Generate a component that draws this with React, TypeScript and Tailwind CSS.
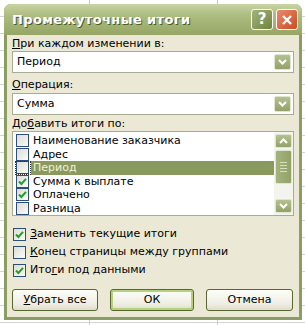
import { useState } from 'react';

const font = { fontFamily: '"DejaVu Sans", "Liberation Sans", sans-serif' };

function Check({ on, className = '' }: { on: boolean; className?: string }) {
  return (
    <span
      className={`flex h-[13px] w-[13px] shrink-0 items-center justify-center border border-[#2c4f7a] bg-[linear-gradient(135deg,#dcdcd4,#fbfbf8)] ${className}`}
    >
      {on && (
        <svg width="9" height="9" viewBox="0 0 9 9">
          <path d="M1 4.5 L3.4 7 L8 1.8" fill="none" stroke="#21a121" strokeWidth="2" />
        </svg>
      )}
    </span>
  );
}

function Chevron({ up = false }: { up?: boolean }) {
  return (
    <svg width="9" height="6" viewBox="0 0 9 6">
      <path d={up ? 'M1 5 L4.5 1.5 L8 5' : 'M1 1 L4.5 4.5 L8 1'} fill="none" stroke="#ffffff" strokeWidth="2" />
    </svg>
  );
}

function ArrowBox({ up = false, h = 16 }: { up?: boolean; h?: number }) {
  return (
    <span
      className={`flex w-[17px] items-center justify-center rounded-[2px] border border-[#dfe5cf] bg-[linear-gradient(#b4c18f,#93a266)] ${
        h === 16 ? 'h-[16px]' : 'h-[14px]'
      }`}
    >
      <Chevron up={up} />
    </span>
  );
}

function Select({ value }: { value: string }) {
  return (
    <div className="flex h-[22px] items-center justify-between border border-[#a5ad92] bg-white pl-[4px] pr-[2px]">
      <span className="text-[11px] text-black">{value}</span>
      <ArrowBox />
    </div>
  );
}

function Btn({ label, u, def = false }: { label: string; u?: number; def?: boolean }) {
  const text =
    u === undefined ? (
      label
    ) : (
      <>
        {label.slice(0, u)}
        <span className="underline">{label[u]}</span>
        {label.slice(u + 1)}
      </>
    );
  return (
    <button
      className={`flex h-[22px] items-center justify-center rounded-[3px] border border-[#56672f] bg-[linear-gradient(#fdfdf9,#efeee4_70%,#dedcca)] text-[11px] text-black ${
        def ? 'shadow-[inset_0_0_0_2px_#b7d07a]' : ''
      }`}
    >
      {text}
    </button>
  );
}

const fields = [
  { name: 'Наименование заказчика', on: false },
  { name: 'Адрес', on: false },
  { name: 'Период', on: false },
  { name: 'Сумма к выплате', on: true },
  { name: 'Оплачено', on: true },
  { name: 'Разница', on: false },
];

export default function App() {
  const [selected] = useState(2);

  return (
    <div
      className="h-[325px] w-[305px] overflow-hidden bg-white bg-[linear-gradient(90deg,transparent_89px,#c9c9c9_89px,#c9c9c9_90px,transparent_90px,transparent_217px,#c9c9c9_217px,#c9c9c9_218px,transparent_218px),repeating-linear-gradient(180deg,transparent_0,transparent_16px,#d4d4d4_16px,#d4d4d4_17px)] pl-[4px] pt-[4px]"
      style={font}
    >
      <div className="flex h-[316px] w-[298px] flex-col overflow-hidden rounded-t-[7px] bg-[#8c9d63]">
        {/* title bar */}
        <div className="flex h-[31px] shrink-0 items-center justify-between bg-[linear-gradient(#c9d4a3,#aebd82_35%,#9cad6d_80%,#94a566)] pl-[8px] pr-[4px]">
          <span className="text-[13px] font-bold tracking-[0.4px] text-white [text-shadow:1px_1px_0_#4d5a2c]">
            Промежуточные итоги
          </span>
          <div className="flex gap-[3px]">
            <span className="flex h-[21px] w-[22px] items-center justify-center rounded-[3px] border border-white bg-[linear-gradient(135deg,#a4b57a,#6f8241)] text-[15px] font-bold text-white">
              ?
            </span>
            <span className="flex h-[21px] w-[22px] items-center justify-center rounded-[3px] border border-white bg-[linear-gradient(135deg,#ec8a6c,#cc4a25)]">
              <svg width="12" height="12" viewBox="0 0 12 12">
                <path d="M2 2 L10 10 M10 2 L2 10" stroke="#ffffff" strokeWidth="2.4" />
              </svg>
            </span>
          </div>
        </div>

        {/* body */}
        <div className="mx-[3px] mb-[3px] flex flex-1 flex-col bg-[#ebe9d6] px-[5px] pt-[2px] text-[11px] text-black">
          <div className="h-[14px] leading-[14px]">
            <span className="underline">П</span>ри каждом изменении в:
          </div>
          <Select value="Период" />

          <div className="mt-[5px] h-[14px] leading-[14px]">
            <span className="underline">О</span>перация:
          </div>
          <div className="mt-[1px]">
            <Select value="Сумма" />
          </div>

          <div className="mt-[2px] h-[14px] leading-[14px]">
            До<span className="underline">б</span>авить итоги по:
          </div>
          <div className="flex h-[85px] border border-[#a5ad92] bg-white">
            <div className="flex flex-1 flex-col pl-[2px] pt-[2px]">
              {fields.map((f, i) => (
                <div key={f.name} className="flex h-[13.5px] items-center">
                  <div
                    className={`flex h-[13.5px] items-center pl-[1px] pr-[2px] ${
                      i === selected ? 'outline-1 outline-dotted outline-[#333] -outline-offset-1' : ''
                    }`}
                  >
                    <Check on={f.on} />
                  </div>
                  <span
                    className={`flex h-[13.5px] flex-1 items-center pl-[2px] leading-none ${
                      i === selected ? 'bg-[#8a9a5e] text-[#f2f0dc]' : ''
                    }`}
                  >
                    {f.name}
                  </span>
                </div>
              ))}
            </div>
            <div className="flex w-[19px] flex-col items-center bg-[#f4f4ee] py-[2px]">
              <ArrowBox up h={14} />
              <span className="mt-[2px] flex h-[34px] w-[17px] flex-col items-center justify-center gap-[2px] rounded-[2px] border border-[#dfe5cf] bg-[linear-gradient(90deg,#a5b47c,#93a266)]">
                <span className="h-px w-[7px] bg-[#d6dec0]" />
                <span className="h-px w-[7px] bg-[#d6dec0]" />
                <span className="h-px w-[7px] bg-[#d6dec0]" />
                <span className="h-px w-[7px] bg-[#d6dec0]" />
              </span>
              <span className="flex-1" />
              <ArrowBox h={14} />
            </div>
          </div>

          <div className="mt-[12px] flex flex-col gap-[5px] pl-[1px]">
            <div className="flex h-[13px] items-center gap-[4px]">
              <Check on />
              <span>
                <span className="underline">З</span>аменить текущие итоги
              </span>
            </div>
            <div className="flex h-[13px] items-center gap-[4px]">
              <Check on={false} />
              <span>
                <span className="underline">К</span>онец страницы между группами
              </span>
            </div>
            <div className="flex h-[13px] items-center gap-[4px]">
              <Check on />
              <span>
                Ито<span className="underline">г</span>и под данными
              </span>
            </div>
          </div>

          <div className="mt-[12px] grid grid-cols-[86px_84px_87px] gap-x-[12px]">
            <Btn label="Убрать все" u={0} />
            <Btn label="ОК" def />
            <Btn label="Отмена" />
          </div>
        </div>
      </div>
    </div>
  );
}
